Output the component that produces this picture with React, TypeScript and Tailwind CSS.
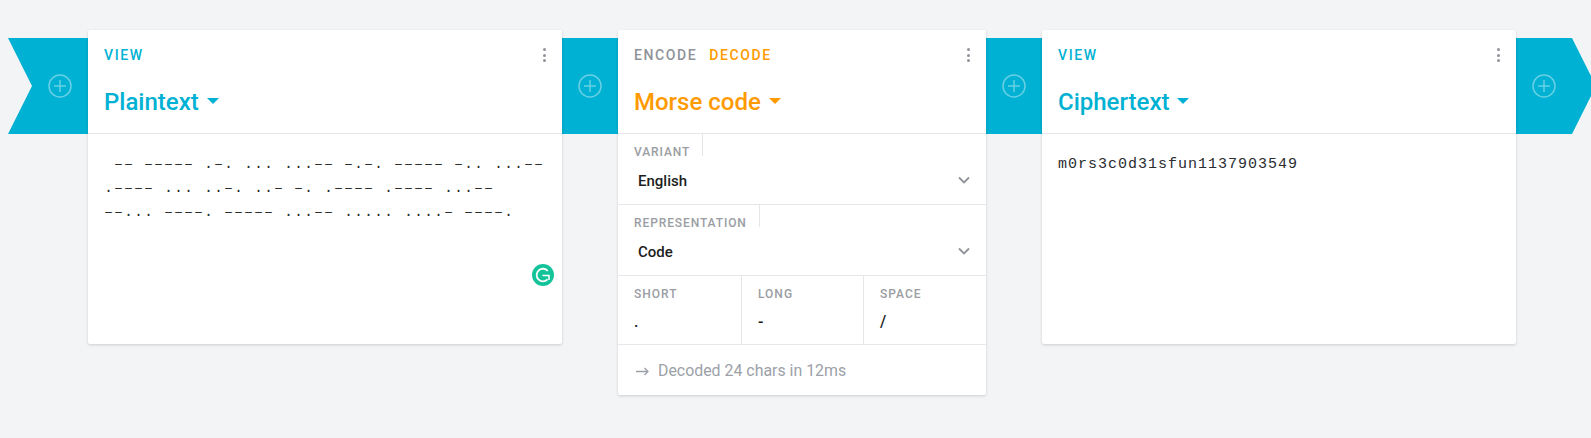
import React from "react";

const Plus = () => (
  <svg width="24" height="24" viewBox="0 0 24 24" fill="none" stroke="#ffffff" strokeOpacity="0.4" strokeWidth="1.5">
    <circle cx="12" cy="12" r="11" />
    <path d="M12 6v12M6 12h12" />
  </svg>
);

const Dots = () => (
  <div className="flex flex-col gap-[2.5px] mr-[16px]">
    <span className="block w-[3px] h-[3px] rounded-full bg-[#8f9399]" />
    <span className="block w-[3px] h-[3px] rounded-full bg-[#8f9399]" />
    <span className="block w-[3px] h-[3px] rounded-full bg-[#8f9399]" />
  </div>
);

const Caret = ({ color }: { color: string }) => (
  <svg width="12" height="6" viewBox="0 0 12 6" className="ml-[8px] mb-[1px]">
    <path d="M0 0h12L6 6z" fill={color} />
  </svg>
);

const Chevron = () => (
  <svg width="14" height="8" viewBox="0 0 14 8" fill="none" stroke="#8f9399" strokeWidth="1.8" className="mr-[15px] -mt-[3px]">
    <path d="M2 1.500l5 5 5-5" />
  </svg>
);

const Header = ({
  tabs,
  title,
  orange,
}: {
  tabs: React.ReactNode;
  title: string;
  orange?: boolean;
}) => (
  <div className="border-b border-[#e4e6e9]">
    <div className="h-[50px] flex items-center justify-between pl-[16px]">
      <div className="flex gap-[12px] text-[14px] font-medium tracking-[1.6px] leading-none">{tabs}</div>
      <Dots />
    </div>
    <div
      className={
        "h-[53px] pb-[10px] pl-[16px] flex items-center text-[24px] font-medium leading-none " +
        (orange ? "text-[#ff9a00]" : "text-[#00b1d3]")
      }
    >
      <span>{title}</span>
      <Caret color={orange ? "#ff9a00" : "#00b1d3"} />
    </div>
  </div>
);

const SelectRow = ({ label, value }: { label: string; value: string }) => (
  <div className="h-[71px] border-b border-[#e4e6e9]">
    <div className="flex">
      <div className="h-[22px] pt-[11px] pl-[16px] pr-[12px] border-r border-[#e4e6e9] text-[12px] font-medium tracking-[0.9px] leading-[14px] text-[#9a9da3]">
        {label}
      </div>
    </div>
    <div className="h-[48px] pt-[3px] pl-[20px] flex items-center justify-between text-[15px] font-medium text-[#1c1e21]">
      <span>{value}</span>
      <Chevron />
    </div>
  </div>
);

const Field = ({ label, value, width }: { label: string; value: string; width: string }) => (
  <div className={"pl-[16px] " + width}>
    <div className="pt-[11px] text-[12px] font-medium tracking-[1px] leading-[14px] text-[#9a9da3]">{label}</div>
    <div className="pt-[11px] text-[16px] font-medium leading-[20px] text-[#1c1e21]">{value}</div>
  </div>
);

const TEAL = "bg-[#00b1d3]";

export default function App() {
  return (
    <div className="w-[1591px] h-[438px] overflow-hidden bg-[#f2f4f6] font-['Roboto',sans-serif]">
      <div className="flex items-start pt-[30px] pl-[8px] w-[1700px]">
        <div className={"w-[80px] h-[96px] mt-[8px] flex items-center justify-end pr-[16px] [clip-path:polygon(0_0,100%_0,100%_100%,0_100%,24px_50%)] " + TEAL}>
          <Plus />
        </div>

        <div className="relative z-10 w-[474px] h-[314px] bg-white rounded-[2px] shadow-[0_1px_3px_rgba(0,0,0,0.16)]">
          <Header title="Plaintext" tabs={<span className="text-[#00b1d3]">VIEW</span>} />
          <div className="px-[16px] pt-[19px] font-['Liberation_Mono',monospace] text-[15px] tracking-[1px] leading-[24px] text-[#2a2c30] whitespace-pre">
            {" –– ––––– .–. ... ...–– –.–. ––––– –.. ...––\n.–––– ... ..–. ..– –. .–––– .–––– ...––\n––... ––––. ––––– ...–– ..... ....– ––––."}
          </div>
          <svg className="absolute left-[444px] top-[234px]" width="22" height="22" viewBox="0 0 22 22">
            <circle cx="11" cy="11" r="11" fill="#15c39a" />
            <path d="M15.800 7A6.300 6.300 0 1 0 15.500 15.400" fill="none" stroke="#fff" strokeWidth="1.800" />
            <path d="M10.500 11.500H17V16" fill="none" stroke="#fff" strokeWidth="1.500" />
          </svg>
        </div>

        <div className={"w-[56px] h-[96px] mt-[8px] flex items-center justify-center " + TEAL}>
          <Plus />
        </div>

        <div className="relative z-10 w-[368px] h-[365px] bg-white rounded-[2px] shadow-[0_1px_3px_rgba(0,0,0,0.16)]">
          <Header
            orange
            title="Morse code"
            tabs={
              <>
                <span className="text-[#8f9399]">ENCODE</span>
                <span className="text-[#ff9a00]">DECODE</span>
              </>
            }
          />
          <SelectRow label="VARIANT" value="English" />
          <SelectRow label="REPRESENTATION" value="Code" />
          <div className="h-[69px] flex border-b border-[#e4e6e9]">
            <Field label="SHORT" value="." width="w-[124px] border-r border-[#e4e6e9]" />
            <Field label="LONG" value="-" width="w-[122px] border-r border-[#e4e6e9]" />
            <Field label="SPACE" value="/" width="flex-1" />
          </div>
          <div className="h-[50px] pt-[2px] pl-[18px] flex items-center text-[15.9px] text-[#9ca1a8]">
            <svg width="13" height="9" viewBox="0 0 13 9" fill="none" stroke="#9ca1a8" strokeWidth="1.3" className="mr-[9px]">
              <path d="M0 4.500h12M8.500 1l3.500 3.500L8.500 8" />
            </svg>
            <span>Decoded 24 chars in 12ms</span>
          </div>
        </div>

        <div className={"w-[56px] h-[96px] mt-[8px] flex items-center justify-center " + TEAL}>
          <Plus />
        </div>

        <div className="relative z-10 w-[474px] h-[314px] bg-white rounded-[2px] shadow-[0_1px_3px_rgba(0,0,0,0.16)]">
          <Header title="Ciphertext" tabs={<span className="text-[#00b1d3]">VIEW</span>} />
          <div className="px-[16px] pt-[19px] font-['Liberation_Mono',monospace] text-[15px] tracking-[1px] leading-[24px] text-[#2a2c30]">
            m0rs3c0d31sfun1137903549
          </div>
        </div>

        <div className={"w-[80px] h-[96px] mt-[8px] flex items-center pl-[16px] [clip-path:polygon(0_0,56px_0,100%_50%,56px_100%,0_100%)] " + TEAL}>
          <Plus />
        </div>
      </div>
    </div>
  );
}
